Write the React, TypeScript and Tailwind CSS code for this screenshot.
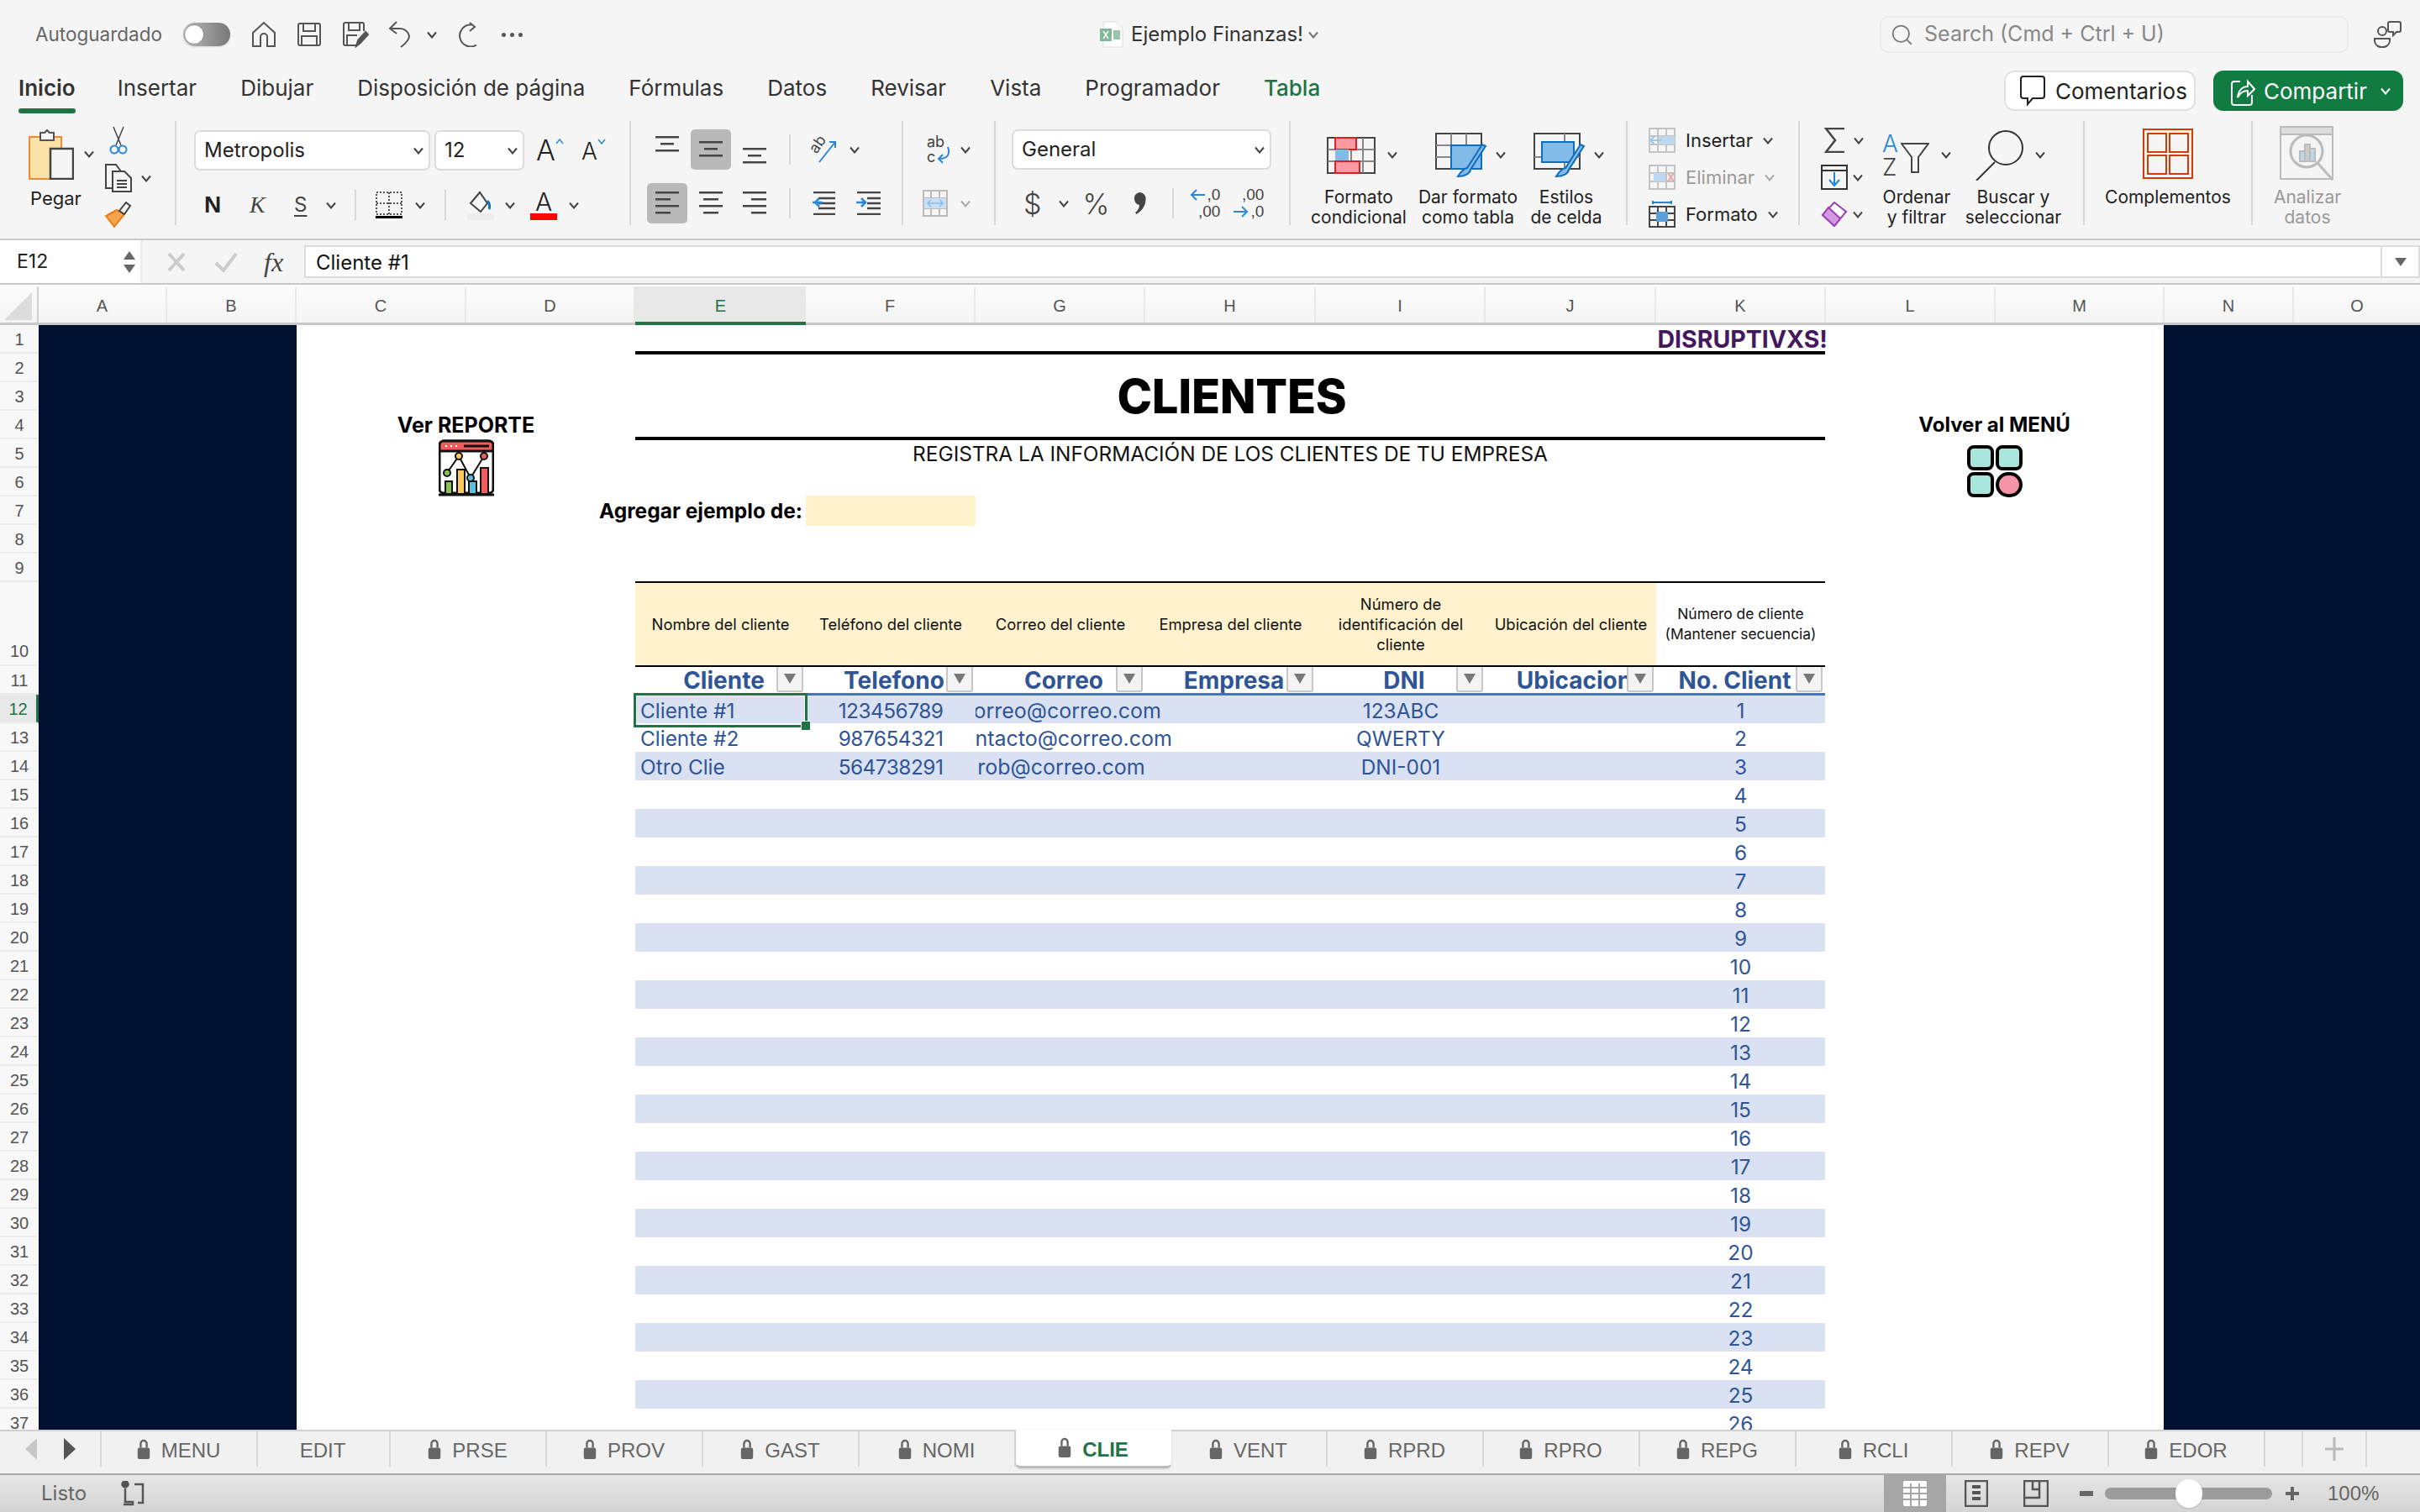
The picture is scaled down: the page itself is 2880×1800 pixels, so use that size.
import { Search } from "lucide-react";

const UI = "font-['Inter',sans-serif]";
const TABS = ["MENU", "EDIT", "PRSE", "PROV", "GAST", "NOMI", "CLIE", "VENT", "RPRD", "RPRO", "REPG", "RCLI", "REPV", "EDOR"];
const RIBBON_TABS = ["Insertar", "Dibujar", "Disposición de página", "Fórmulas", "Datos", "Revisar", "Vista", "Programador"];

function Chev({ className = "", color = "#444" }: { className?: string; color?: string }) {
  return (
    <svg width="12" height="9" viewBox="0 0 12 9" className={`shrink-0 ${className}`} fill="none" stroke={color} strokeWidth="2">
      <path d="M1 1.5 6 7.5 11 1.5" />
    </svg>
  );
}

function Sep() {
  return <div className="w-[2px] h-[124px] bg-[#d8d8d8] shrink-0" />;
}

function MiniSep({ className = "" }: { className?: string }) {
  return <div className={`w-[2px] h-[36px] bg-[#d8d8d8] shrink-0 ${className}`} />;
}

function Lines({ widths, gap = 10 }: { widths: [number, number][]; gap?: number }) {
  // horizontal alignment bars
  const h = (widths.length - 1) * gap + 4;
  return (
    <svg width="28" height={h} viewBox={`0 0 28 ${h}`} fill="#444" className="shrink-0">
      {widths.map(([x, w], i) => (
        <rect key={i} x={x} y={i * gap} width={w} height="2.5" />
      ))}
    </svg>
  );
}

function SelectBox({ text, className }: { text: string; className: string }) {
  return (
    <div className={`h-[48px] bg-white border-2 border-[#dcdcdc] rounded-[7px] flex items-center justify-between pl-[10px] pr-[6px] text-[24px] text-[#222] shrink-0 ${className}`}>
      <span>{text}</span>
      <Chev />
    </div>
  );
}

function BigLabel({ lines, className = "" }: { lines: string[]; className?: string }) {
  return (
    <div className={`text-[21px] leading-[24px] text-center whitespace-nowrap ${className}`}>
      {lines.map((l) => (
        <div key={l}>{l}</div>
      ))}
    </div>
  );
}

function GridIcon({ children, w = 60, h = 54 }: { children: React.ReactNode; w?: number; h?: number }) {
  return (
    <svg width={w} height={h} viewBox={`0 0 ${w} ${h}`} fill="none" className="shrink-0">
      {children}
    </svg>
  );
}

function TitleBar() {
  return (
    <div className="h-[80px] pt-[2px] flex items-center">
      <span className="ml-[42px] text-[22.5px] text-[#666]">Autoguardado</span>
      <div className="ml-[25px] w-[56px] h-[28px] rounded-full bg-gradient-to-r from-[#bdbdbd] to-[#777] flex items-center shadow">
        <div className="w-[24px] h-[24px] ml-[1px] bg-white rounded-full border border-[#888]" />
      </div>
      <svg width="30" height="32" viewBox="0 0 30 32" fill="none" stroke="#555" strokeWidth="2" className="ml-[25px]">
        <path d="M2 14 15 2l13 12v16H19V19a4 4 0 0 0-8 0v11H2Z" />
      </svg>
      <svg width="30" height="30" viewBox="0 0 30 30" fill="none" stroke="#555" strokeWidth="2" className="ml-[24px]">
        <path d="M4 2h22a2 2 0 0 1 2 2v22a2 2 0 0 1-2 2H4a2 2 0 0 1-2-2V4a2 2 0 0 1 2-2Z" />
        <path d="M8 2v9h14V2M6 28V17h18v11" />
      </svg>
      <svg width="32" height="32" viewBox="0 0 32 32" fill="none" stroke="#555" strokeWidth="2" className="ml-[24px]">
        <path d="M18 29H4a2 2 0 0 1-2-2V4a2 2 0 0 1 2-2h20a2 2 0 0 1 2 2v8" />
        <path d="M8 2v9h13V2M6 29V17h12" />
        <path d="m17 30 2-7 9-10 3 3-9 10Z" fill="#555" />
      </svg>
      <svg width="28" height="32" viewBox="0 0 28 32" fill="none" stroke="#555" strokeWidth="2" className="ml-[23px]">
        <path d="M10 1 2 9l8 6M2 9h12a11 11 0 0 1 11 9c0 5-6 10-10 13" />
      </svg>
      <Chev className="ml-[18px]" />
      <svg width="28" height="30" viewBox="0 0 28 30" fill="none" stroke="#555" strokeWidth="2" className="ml-[23px]">
        <path d="M18 3.5a13 13 0 1 0 6 24M16 1l6 5-6 5" />
      </svg>
      <div className="ml-[26px] flex gap-[5px]">
        <div className="w-[5px] h-[5px] rounded-full bg-[#555]" />
        <div className="w-[5px] h-[5px] rounded-full bg-[#555]" />
        <div className="w-[5px] h-[5px] rounded-full bg-[#555]" />
      </div>
      <div className="ml-[687px] flex items-center">
        <svg width="28" height="32" viewBox="0 0 28 32" className="shrink-0">
          <path d="M4 1h15l8 8v22H4Z" fill="#fff" stroke="#ddd" />
          <rect x="0" y="9" width="14" height="15" fill="#7fb799" />
          <rect x="16" y="11" width="8" height="11" fill="#7fb799" opacity="0.8" />
          <path d="M4 12l6 9M10 12l-6 9" stroke="#fff" strokeWidth="1.5" />
        </svg>
        <span className="ml-[9px] text-[24px] text-[#333]">Ejemplo Finanzas!</span>
        <Chev className="ml-[6px]" color="#777" />
      </div>
      <div className="ml-[668px] w-[558px] h-[44px] border-2 border-[#ebebeb] rounded-[10px] flex items-center pl-[10px] text-[#888] text-[25px]">
        <Search size={29} strokeWidth={1.5} color="#777" />
        <span className="ml-[12px]">Search (Cmd + Ctrl + U)</span>
      </div>
      <svg width="34" height="32" viewBox="0 0 34 32" fill="none" stroke="#555" strokeWidth="2" className="ml-[29px]">
        <circle cx="11" cy="12" r="5" />
        <path d="M2 21h18v3a8 8 0 0 1-9 7 8 8 0 0 1-9-7Z" />
        <path d="M20 1h11a2 2 0 0 1 2 2v8a2 2 0 0 1-2 2h-3l-4 4v-4h-4a2 2 0 0 1-2-2V3a2 2 0 0 1 2-2Z" />
      </svg>
    </div>
  );
}

function TabsRow() {
  return (
    <div className="h-[54px] flex items-start pr-[20px]">
      <div className="ml-[22px] flex flex-col items-stretch">
        <span className="text-[26px] leading-[50px] font-semibold text-[#333]">Inicio</span>
        <div className="h-[6px] rounded-full bg-[#217346] -mt-[1px]" />
      </div>
      <div className="ml-[50px] flex gap-[52px] text-[26px] leading-[50px] text-[#333]">
        {RIBBON_TABS.map((t) => (
          <span key={t}>{t}</span>
        ))}
        <span className="text-[#217346] font-medium">Tabla</span>
      </div>
      <div className="ml-auto mt-[4px] w-[228px] h-[48px] bg-white border-2 border-[#e0e0e0] rounded-[12px] flex items-center pl-[16px] text-[26px] text-[#222]">
        <svg width="32" height="38" viewBox="0 0 32 38" fill="none" stroke="#222" strokeWidth="2" className="shrink-0">
          <path d="M5 2h22a3 3 0 0 1 3 3v20a3 3 0 0 1-3 3H16l-6 7v-7H5a3 3 0 0 1-3-3V5a3 3 0 0 1 3-3Z" />
        </svg>
        <span className="ml-[11px]">Comentarios</span>
      </div>
      <div className="ml-[21px] mt-[4px] w-[226px] h-[48px] bg-[#107c41] rounded-[12px] flex items-center pl-[20px] text-[26px] text-white">
        <svg width="30" height="38" viewBox="0 0 30 38" fill="none" stroke="#fff" strokeWidth="2" className="shrink-0">
          <path d="M12 8H5a3 3 0 0 0-3 3v22a3 3 0 0 0 3 3h18a3 3 0 0 0 3-3v-9" />
          <path d="M9 27c1-9 6-13 12-13V8l8 9-8 8v-6c-5 0-9 2-12 8Z" />
        </svg>
        <span className="ml-[10px]">Compartir</span>
        <Chev className="ml-[16px]" color="#fff" />
      </div>
    </div>
  );
}

function Caret({ up }: { up?: boolean }) {
  return (
    <svg width="10" height="7" viewBox="0 0 10 7" fill="none" stroke="#2b88d8" strokeWidth="1.5" className="shrink-0 -mt-[22px]">
      <path d={up ? "M1 6 5 1l4 5" : "M1 1l4 5 4-5"} />
    </svg>
  );
}

function Ribbon() {
  return (
    <div className="h-[150px] pt-[10px] flex text-[#222]">
      {/* Portapapeles */}
      <div className="w-[208px] shrink-0 flex">
        <div className="w-[122px]">
          <div className="flex pl-[34px] pt-[10px]">
            <svg width="54" height="60" viewBox="0 0 54 60" fill="none" className="shrink-0">
              <path d="M1 9h38v50H1Z" fill="#fbe3a8" stroke="#ed8b33" strokeWidth="2" />
              <path d="M14 4h5l3-3 3 3h5v9H14Z" fill="#f5f5f5" stroke="#555" strokeWidth="2" />
              <rect x="26" y="23" width="27" height="36" fill="#f5f5f5" stroke="#444" strokeWidth="2.5" />
            </svg>
            <Chev className="ml-[12px] mt-[25px]" />
          </div>
          <div className="mt-[6px] pl-[36px] text-[22px]">Pegar</div>
        </div>
        <div className="w-[50px] flex flex-col gap-[11px] pt-[6px] -ml-[1px]">
          <svg width="24" height="34" viewBox="0 0 24 34" fill="none" stroke="#444" strokeWidth="1.5" className="ml-[8px] shrink-0">
            <path d="M6 1l9 22M18 1 9 23" />
            <circle cx="7" cy="28" r="4.5" stroke="#2b88d8" strokeWidth="2" />
            <circle cx="17" cy="28" r="4.5" stroke="#2b88d8" strokeWidth="2" />
          </svg>
          <div className="flex items-center w-[60px]">
            <svg width="34" height="34" viewBox="0 0 34 34" fill="none" stroke="#444" strokeWidth="2" className="ml-[3px] shrink-0">
              <path d="M10 29H2V1h12l6 8M10 9h14l8 8v16H10ZM15 20h12M15 24h12M15 28h12" />
            </svg>
            <Chev className="ml-[10px]" />
          </div>
          <svg width="34" height="32" viewBox="0 0 34 32" className="ml-[3px] shrink-0">
            <path d="M2 17 12 30l12-15-9-5Z" fill="#f6a24b" stroke="#e47d1a" strokeWidth="2" />
            <path d="m18 11 8-10 5 4-7 10Z" fill="#f0f0f0" stroke="#444" strokeWidth="2" />
          </svg>
        </div>
      </div>
      <Sep />
      {/* Fuente */}
      <div className="w-[539px] shrink-0 pl-[21px] pt-[10px]">
        <div className="flex items-center">
          <SelectBox text="Metropolis" className="w-[281px]" />
          <SelectBox text="12" className="w-[107px] ml-[5px]" />
          <div className="ml-[14px] text-[34px] leading-[48px] font-light">A</div>
          <Caret up />
          <div className="ml-[21px] text-[28px] leading-[48px] font-light mt-[2px]">A</div>
          <Caret />
        </div>
        <div className="flex items-center h-[48px] mt-[16px]">
          <span className="ml-[12px] font-['Liberation_Sans',sans-serif] font-bold text-[28px] w-[22px]">N</span>
          <span className="ml-[32px] font-['Liberation_Serif',serif] italic text-[28px] w-[20px] text-[#444]">K</span>
          <span className="ml-[33px] text-[24px] underline underline-offset-4 text-[#444] w-[16px]">S</span>
          <Chev className="ml-[22px]" />
          <MiniSep className="ml-[22px]" />
          <svg width="32" height="32" viewBox="0 0 32 32" fill="none" stroke="#555" strokeWidth="2" strokeDasharray="2 2" className="ml-[23px]">
            <rect x="1" y="1" width="30" height="26" />
            <path d="M16 1v26M1 14h30" />
            <path d="M0 30.5h32" stroke="#000" strokeWidth="3" strokeDasharray="none" />
          </svg>
          <Chev className="ml-[15px]" />
          <MiniSep className="ml-[23px]" />
          <div className="ml-[25px] flex flex-col items-center w-[32px] shrink-0">
            <svg width="28" height="26" viewBox="0 0 28 26" fill="none" stroke="#444" strokeWidth="2">
              <path d="M2 15 13 2l9 13-8 10Z" />
              <path d="M22 12c3 3 3 8 2 10" stroke="#106ebe" strokeWidth="3" />
            </svg>
            <div className="w-[32px] h-[8px] bg-[#ededed] mt-[1px]" />
          </div>
          <Chev className="ml-[13px]" />
          <div className="ml-[18px] flex flex-col items-center w-[32px] shrink-0">
            <span className="text-[30px] leading-[26px] font-light">A</span>
            <div className="w-[32px] h-[8px] bg-[#ff0000] mt-[1px]" />
          </div>
          <Chev className="ml-[14px]" />
        </div>
      </div>
      <Sep />
      {/* Alineación */}
      <div className="w-[188px] shrink-0 pt-[10px]">
        <div className="flex items-center h-[48px]">
          <div className="ml-[29px] self-start mt-[8px]"><Lines widths={[[0, 28], [6, 16], [0, 28]]} gap={8} /></div>
          <div className="ml-[14px] w-[48px] h-[48px] rounded-[5px] bg-[#b9b9b9] flex items-center justify-center"><Lines widths={[[0, 28], [6, 16], [0, 28]]} gap={8} /></div>
          <div className="ml-[14px] self-end mb-[6px]"><Lines widths={[[0, 28], [6, 16], [0, 28]]} gap={8} /></div>
        </div>
        <div className="flex items-center h-[48px] mt-[16px]">
          <div className="ml-[19px] w-[48px] h-[48px] rounded-[5px] bg-[#b9b9b9] flex items-center justify-center"><Lines widths={[[0, 28], [0, 18], [0, 28], [0, 18]]} gap={8} /></div>
          <div className="ml-[14px]"><Lines widths={[[0, 28], [5, 18], [0, 28], [5, 18]]} gap={8} /></div>
          <div className="ml-[24px]"><Lines widths={[[0, 28], [10, 18], [0, 28], [10, 18]]} gap={8} /></div>
        </div>
      </div>
      <div className="flex flex-col gap-[28px] pt-[16px] shrink-0">
        <MiniSep />
        <MiniSep />
      </div>
      <div className="w-[132px] shrink-0 pt-[10px]">
        <div className="flex items-center h-[48px]">
          <svg width="34" height="34" viewBox="0 0 34 34" fill="none" className="ml-[22px] shrink-0 overflow-visible">
            <text x="2" y="18" fontSize="18" fill="#444" transform="rotate(-55 10 14)">ab</text>
            <path d="M12 32 31 8M24 8h7v7" stroke="#2b88d8" strokeWidth="2" />
          </svg>
          <Chev className="ml-[14px]" />
        </div>
        <div className="flex items-center h-[48px] mt-[16px]">
          <svg width="30" height="28" viewBox="0 0 30 28" fill="none" className="ml-[25px] shrink-0">
            <path d="M2 1h26M8 8h20M8 14h20M8 20h20M2 27h26" stroke="#444" strokeWidth="2.5" />
            <path d="M1 13h12M9 8l-5 5 5 5" stroke="#2b88d8" strokeWidth="2.5" />
          </svg>
          <svg width="30" height="28" viewBox="0 0 30 28" fill="none" className="ml-[22px] shrink-0">
            <path d="M2 1h28M14 8h16M14 14h16M14 20h16M2 27h28" stroke="#444" strokeWidth="2.5" />
            <path d="M1 13h12M7 8l5 5-5 5" stroke="#2b88d8" strokeWidth="2.5" />
          </svg>
        </div>
      </div>
      <Sep />
      {/* Ajustar texto */}
      <div className="w-[108px] shrink-0 pt-[10px]">
        <div className="flex items-center h-[48px]">
          <div className="ml-[28px] w-[30px] h-[36px] shrink-0 text-[18px] leading-[18px] text-[#444] relative">
            <div>ab</div>
            <div>c</div>
            <svg width="20" height="22" viewBox="0 0 20 22" fill="none" stroke="#2b88d8" strokeWidth="2" className="absolute left-[10px] top-[14px]">
              <path d="M15 1c3 8 0 14-10 14M9 10l-5 5 5 5" />
            </svg>
          </div>
          <Chev className="ml-[10px]" />
        </div>
        <div className="flex items-center h-[48px] mt-[16px]">
          <svg width="30" height="32" viewBox="0 0 30 32" fill="none" className="ml-[23px] shrink-0">
            <rect x="1" y="1" width="28" height="30" stroke="#bbb" strokeWidth="2" />
            <path d="M1 10h28M1 22h28M10 1v9M20 1v9M10 22v9M20 22v9" stroke="#bbb" strokeWidth="2" />
            <rect x="2" y="10" width="26" height="12" fill="#c9e0f4" />
            <path d="M6 16h18M10 12l-4 4 4 4M20 12l4 4-4 4" stroke="#8dbce6" strokeWidth="1.5" />
          </svg>
          <Chev className="ml-[15px]" color="#aaa" />
        </div>
      </div>
      <Sep />
      {/* Número */}
      <div className="w-[349px] shrink-0 pt-[10px]">
        <SelectBox text="General" className="w-[309px] ml-[19px]" />
        <div className="flex items-center h-[48px] mt-[16px]">
          <span className="ml-[33px] text-[34px] font-light text-[#444]">$</span>
          <Chev className="ml-[21px]" />
          <span className="ml-[16px] text-[34px] font-light text-[#444]">%</span>
          <svg width="15" height="26" viewBox="0 0 15 26" fill="#444" className="ml-[29px] shrink-0">
            <path d="M7 0a7.500 7.500 0 0 1 7.500 8c0 7-4 14-11 18L2 24c3-2 5-6 5-9a7 7 0 0 1-6-7 7 7 0 0 1 6-8Z" />
          </svg>
          <MiniSep className="ml-[31px]" />
          <div className="ml-[23px] w-[32px] font-['Liberation_Sans',sans-serif] text-[19px] leading-[20px] text-[#444]">
            <div className="flex justify-end items-center">
              <svg width="18" height="16" viewBox="0 0 18 16" fill="none" stroke="#2b88d8" strokeWidth="2" className="shrink-0 mr-[2px]">
                <path d="M18 8H2M8 2 2 8l6 6" />
              </svg>
              <span>,0</span>
            </div>
            <div className="text-right">,00</div>
          </div>
          <div className="ml-[20px] w-[32px] font-['Liberation_Sans',sans-serif] text-[19px] leading-[20px] text-[#444]">
            <div className="text-right">,00</div>
            <div className="flex justify-end items-center">
              <svg width="18" height="16" viewBox="0 0 18 16" fill="none" stroke="#2b88d8" strokeWidth="2" className="shrink-0 mr-[2px]">
                <path d="M0 8h16M10 2l6 6-6 6" />
              </svg>
              <span>,0</span>
            </div>
          </div>
        </div>
      </div>
      <Sep />
      {/* Estilos */}
      <div className="w-[399px] shrink-0 flex">
        <div className="w-[140px] ml-[11px] flex flex-col items-center">
          <div className="h-[79px] flex items-center pt-[2px] ml-[8px]">
            <GridIcon w={58} h={44}>
              <path d="M1 1h56v42H1Z" stroke="#444" strokeWidth="2" />
              <path d="M1 15h56M1 29h56M29 1v42M43 1v42" stroke="#888" strokeWidth="2" />
              <rect x="10" y="1" width="25" height="14" fill="#ff9aa2" stroke="#e02020" strokeWidth="2" />
              <rect x="10" y="15" width="16" height="14" fill="#83bbe8" />
              <rect x="10" y="29" width="29" height="14" fill="#ff9aa2" stroke="#e02020" strokeWidth="2" />
            </GridIcon>
            <Chev className="ml-[14px]" />
          </div>
          <BigLabel lines={["Formato", "condicional"]} />
        </div>
        <div className="w-[130px] flex flex-col items-center -ml-[5px]">
          <div className="h-[79px] flex items-center pt-[2px] ml-[6px]">
            <GridIcon w={62} h={54}>
              <path d="M1 1h54v42H1Z" stroke="#444" strokeWidth="2" />
              <path d="M1 15h54M1 29h54M19 1v42M37 1v42" stroke="#888" strokeWidth="2" />
              <rect x="19" y="15" width="36" height="28" fill="#83bbe8" stroke="#106ebe" strokeWidth="2" />
              <path d="M56 14 38 42c-5 1-8 5-11 10 8 0 14-3 15-8l18-28Z" fill="#83bbe8" stroke="#106ebe" strokeWidth="2" />
            </GridIcon>
            <Chev className="ml-[10px]" />
          </div>
          <BigLabel lines={["Dar formato", "como tabla"]} />
        </div>
        <div className="w-[100px] flex flex-col items-center ml-[2px]">
          <div className="h-[79px] flex items-center pt-[2px] ml-[6px]">
            <GridIcon w={62} h={54}>
              <path d="M1 1h54v42H1Z" stroke="#444" strokeWidth="2" />
              <path d="M1 29h54M37 1v42" stroke="#888" strokeWidth="2" />
              <rect x="10" y="11" width="38" height="24" fill="#83bbe8" stroke="#106ebe" strokeWidth="2" />
              <path d="M56 14 38 42c-5 1-8 5-11 10 8 0 14-3 15-8l18-28Z" fill="#83bbe8" stroke="#106ebe" strokeWidth="2" />
            </GridIcon>
            <Chev className="ml-[10px]" />
          </div>
          <BigLabel lines={["Estilos", "de celda"]} />
        </div>
      </div>
      <Sep />
      {/* Celdas */}
      <div className="w-[203px] shrink-0 pl-[25px] text-[22px] flex flex-col gap-[14px] pt-[8px]">
        <div className="flex items-center h-[30px]">
          <svg width="32" height="30" viewBox="0 0 32 30" fill="none" className="shrink-0">
            <path d="M1 1h30v28H1ZM1 10h30M1 20h30M11 1v28M21 1v28" stroke="#c4c4c4" strokeWidth="2" />
            <rect x="12" y="10" width="19" height="10" fill="#bcd8f0" />
            <path d="M1 15h14M7 10l-5 5 5 5" stroke="#9cc6ea" strokeWidth="2" />
          </svg>
          <span className="ml-[12px] text-[#222]">Insertar</span>
          <Chev className="ml-[12px]" />
        </div>
        <div className="flex items-center h-[30px] text-[#9a9a9a]">
          <svg width="32" height="30" viewBox="0 0 32 30" fill="none" className="shrink-0">
            <path d="M1 1h30v28H1ZM1 10h30M1 20h30M11 1v28M21 1v28" stroke="#c4c4c4" strokeWidth="2" />
            <rect x="6" y="10" width="14" height="10" fill="#bcd8f0" />
            <path d="m23 10 7 10m0-10-7 10" stroke="#f0a0a0" strokeWidth="2" />
          </svg>
          <span className="ml-[12px]">Eliminar</span>
          <Chev className="ml-[12px]" color="#aaa" />
        </div>
        <div className="flex items-center h-[30px]">
          <svg width="32" height="32" viewBox="0 0 32 32" fill="none" className="shrink-0">
            <path d="M1 7h30v24H1ZM1 15h30M1 23h30M11 7v24M21 7v24" stroke="#444" strokeWidth="2" />
            <rect x="9" y="13" width="14" height="12" fill="#5a9fd8" />
            <path d="M5 2h22M5 0v4M27 0v4" stroke="#1f85d3" strokeWidth="2" />
          </svg>
          <span className="ml-[12px]">Formato</span>
          <Chev className="ml-[12px]" />
        </div>
      </div>
      <Sep />
      {/* Edición */}
      <div className="w-[337px] shrink-0 flex">
        <div className="w-[92px] pl-[25px] flex flex-col gap-[14px] pt-[8px]">
          <div className="flex items-center h-[30px]">
            <svg width="26" height="30" viewBox="0 0 26 30" fill="none" stroke="#444" strokeWidth="2.5" className="shrink-0 ml-[4px]">
              <path d="M24 1H2l11 14L2 29h22" />
            </svg>
            <Chev className="ml-[9px]" />
          </div>
          <div className="flex items-center h-[30px]">
            <svg width="32" height="30" viewBox="0 0 32 30" fill="none" className="shrink-0">
              <path d="M1 1h30v28H1Z" stroke="#333" strokeWidth="2" />
              <path d="M1 7h30" stroke="#333" strokeWidth="2" />
              <path d="M16 9v15M10 18l6 7 6-7" stroke="#1f85d3" strokeWidth="2" />
            </svg>
            <Chev className="ml-[6px]" />
          </div>
          <div className="flex items-center h-[30px]">
            <svg width="32" height="30" viewBox="0 0 32 30" className="shrink-0">
              <path d="M16 1 30 12 16 29 2 16Z" fill="#fff" stroke="#9a3fb5" strokeWidth="2" />
              <path d="M9 7 23 20 16 29 2 16Z" fill="#d49ae0" stroke="#9a3fb5" strokeWidth="2" />
            </svg>
            <Chev className="ml-[6px]" />
          </div>
        </div>
        <div className="w-[110px] flex flex-col items-center ml-[-8px]">
          <div className="h-[79px] flex items-center pt-[2px]">
            <div className="w-[56px] h-[56px] shrink-0 relative text-[28px] leading-[28px] font-light text-[#444]">
              <div className="text-[#2b88d8]">A</div>
              <div>Z</div>
              <svg width="34" height="36" viewBox="0 0 34 36" fill="none" stroke="#444" strokeWidth="2" className="absolute right-0 top-[13px]">
                <path d="M1 1h32L21 17v18h-8V17Z" />
              </svg>
            </div>
            <Chev className="ml-[14px]" />
          </div>
          <BigLabel lines={["Ordenar", "y filtrar"]} />
        </div>
        <div className="w-[120px] flex flex-col items-center">
          <div className="h-[79px] flex items-center pt-[2px] -ml-[8px]">
            <svg width="58" height="60" viewBox="0 0 58 60" fill="none" stroke="#333" strokeWidth="2" className="shrink-0">
              <circle cx="37" cy="21" r="20" />
              <path d="M24 38 2 60" />
            </svg>
            <Chev className="ml-[14px]" />
          </div>
          <BigLabel lines={["Buscar y", "seleccionar"]} />
        </div>
      </div>
      <Sep />
      {/* Complementos */}
      <div className="w-[198px] shrink-0 flex flex-col items-center pt-[9px]">
        <svg width="60" height="60" viewBox="0 0 60 60" fill="none" stroke="#d83b01" strokeWidth="2" className="mb-[10px] shrink-0">
          <rect x="1" y="1" width="58" height="58" />
          <rect x="6" y="6" width="22" height="22" />
          <rect x="32" y="6" width="22" height="22" />
          <rect x="6" y="32" width="22" height="22" />
          <rect x="32" y="32" width="22" height="22" />
        </svg>
        <BigLabel lines={["Complementos"]} />
      </div>
      <Sep />
      <div className="w-[130px] shrink-0 flex flex-col items-center text-[#999] pt-[6px]">
        <svg width="66" height="66" viewBox="0 0 66 66" fill="none" stroke="#bbb" strokeWidth="2" className="mb-[7px] shrink-0">
          <rect x="1" y="1" width="62" height="62" />
          <rect x="1" y="1" width="62" height="9" fill="#ddd" />
          <circle cx="32" cy="30" r="19" fill="#f4f4f4" strokeWidth="3" />
          <path d="m45 44 18 20" strokeWidth="3" />
          <rect x="24" y="30" width="6" height="12" fill="#bcd8f0" />
          <rect x="30" y="22" width="6" height="20" fill="#ccc" />
          <rect x="36" y="27" width="6" height="15" fill="#bcd8f0" />
        </svg>
        <BigLabel lines={["Analizar", "datos"]} />
      </div>
    </div>
  );
}

function FormulaBar() {
  return (
    <div className="h-[55px] bg-white border-y-2 border-[#c8c8c8] flex items-stretch">
      <div className="w-[170px] bg-white flex items-center pl-[20px] pr-[6px] text-[23px] text-[#222] border-r-[3px] border-[#ededed] justify-between">
        <span>E12</span>
        <div className="flex flex-col gap-[6px] text-[#666]">
          <svg width="14" height="10" viewBox="0 0 14 10" fill="#666"><path d="M7 0 14 10H0Z" /></svg>
          <svg width="14" height="10" viewBox="0 0 14 10" fill="#666"><path d="M7 10 14 0H0Z" /></svg>
        </div>
      </div>
      <div className="w-[192px] bg-[#f5f5f5] flex items-center">
        <svg width="22" height="24" viewBox="0 0 22 24" fill="none" stroke="#ccc" strokeWidth="4" className="ml-[29px]">
          <path d="m2 2 18 20M20 2 2 22" />
        </svg>
        <svg width="28" height="24" viewBox="0 0 28 24" fill="none" stroke="#ccc" strokeWidth="4" className="ml-[34px]">
          <path d="m2 13 9 9L26 2" />
        </svg>
        <span className="ml-[31px] font-['Liberation_Serif',serif] italic text-[32px] text-[#444]">fx</span>
      </div>
      <div className="flex-1 bg-[#f5f5f5] py-[6px]">
        <div className="h-full bg-white border-y-2 border-l-2 border-[#dcdcdc] flex items-center pl-[12px] pt-[2px] text-[24px] text-[#111]">Cliente #1</div>
      </div>
      <div className="w-[47px] bg-[#f5f5f5] py-[6px]">
        <div className="h-full bg-white border-2 border-[#dcdcdc] flex items-center justify-center">
          <svg width="14" height="10" viewBox="0 0 14 10" fill="#666"><path d="M7 10 14 0H0Z" /></svg>
        </div>
      </div>
    </div>
  );
}

function ColumnHeaders() {
  const cols: [string, string][] = [
    ["A", "w-[153px]"], ["B", "w-[154px]"], ["C", "w-[202px]"], ["D", "w-[201px]"], ["E", "w-[203px]"],
    ["F", "w-[202px]"], ["G", "w-[202px]"], ["H", "w-[203px]"], ["I", "w-[202px]"], ["J", "w-[203px]"],
    ["K", "w-[202px]"], ["L", "w-[202px]"], ["M", "w-[201px]"], ["N", "w-[154px]"], ["O", "w-[152px]"],
  ];
  return (
    <div className="h-[48px] flex border-t-2 border-t-white border-b-[3px] border-[#c8c8c8] bg-gradient-to-b from-[#fcfcfc] to-[#f4f4f4] font-['Liberation_Sans',sans-serif] text-[20px] text-[#555]">
      <div className="w-[46px] shrink-0 border-r-2 border-[#d0d0d0] flex items-end justify-center pb-[2px]">
        <svg width="34" height="34" viewBox="0 0 34 34" fill="#dcdcdc"><path d="M33 0v33H0Z" /></svg>
      </div>
      {cols.map(([c, w]) => (
        <div
          key={c}
          className={`${w} shrink-0 flex items-center justify-center pt-[3px] ${
            c === "E"
              ? "bg-[#e8e8e8] text-[#217346] border-b-[4px] border-[#217346] -mb-[3px]"
              : "border-r-2 border-[#e8e8e8]"
          }`}
        >
          {c}
        </div>
      ))}
    </div>
  );
}

function RowHeaders() {
  const rows = Array.from({ length: 37 }, (_, i) => i + 1);
  return (
    <div className="w-[46px] shrink-0 font-['Liberation_Sans',sans-serif] text-[20px] text-[#555] bg-[#f8f8f8]">
      {rows.map((r) => (
        <div
          key={r}
          className={`flex justify-center border-b-2 ${r === 10 ? "h-[100px] items-end pb-[1px]" : "h-[34px] items-center pt-[2px]"} ${
            r === 12 ? "bg-[#e8e8e8] text-[#217346] border-r-[3px] border-r-[#217346] border-b-[#e8e8e8]" : "border-[#ebebeb]"
          }`}
        >
          {r}
        </div>
      ))}
    </div>
  );
}

function FilterButton() {
  return (
    <div className="absolute right-[3px] top-0 w-[32px] h-[30px] bg-[#f4f4f4] border-2 border-t-0 border-[#c8c8c8] rounded-b-[3px] flex items-center justify-center">
      <svg width="14" height="12" viewBox="0 0 14 12" fill="#777"><path d="M0 0h14L7 12Z" /></svg>
    </div>
  );
}

function SheetTable() {
  const heads = ["Nombre del cliente", "Teléfono del cliente", "Correo del cliente", "Empresa del cliente", "Número de identificación del cliente", "Ubicación del cliente"];
  const names = ["Cliente", "Telefono", "Correo", "Empresa", "DNI", "Ubicacion"];
  const data: Record<number, string[]> = {
    1: ["Cliente #1", "123456789", "correo@correo.com", "123ABC"],
    2: ["Cliente #2", "987654321", "contacto@correo.com", "QWERTY"],
    3: ["Otro Clie", "564738291", "rob@correo.com", "DNI-001"],
  };
  const tpl = "grid grid-cols-[203px_202px_202px_203px_202px_203px_201px]";
  return (
    <div className="shrink-0">
      <div className={`${tpl} h-[102px] border-y-2 border-black text-[18.4px] leading-[24px] text-[#111] text-center`}>
        {heads.map((h) => (
          <div key={h} className="bg-[#fff2cc] flex items-center justify-center px-[10px]">
            {h}
          </div>
        ))}
        <div className="flex items-center justify-center text-[17.4px]">
          Número de cliente
          <br />
          (Mantener secuencia)
        </div>
      </div>
      <div className={`${tpl} h-[34px] border-b-[3px] border-[#4472c4] text-[28px] font-bold text-[#2f5597]`}>
        {names.map((n) => (
          <div key={n} className="relative flex justify-center items-center whitespace-nowrap overflow-hidden pl-[8px]">
            <span className="shrink-0 leading-[30px]">{n}</span>
            <FilterButton />
          </div>
        ))}
        <div className="relative flex justify-center items-center whitespace-nowrap overflow-hidden pr-[14px]">
          <span className="shrink-0 leading-[30px]">No. Client</span>
          <FilterButton />
        </div>
      </div>
      {Array.from({ length: 26 }, (_, i) => i + 1).map((n) => {
        const row = data[n];
        return (
          <div key={n} className={`${tpl} text-[24.4px] leading-[36px] text-[#2f5597] ${n % 2 === 1 ? "bg-[#d9e1f2]" : ""} ${n === 1 ? "h-[33px]" : "h-[34px]"}`}>
            <div className="relative pl-[6px] whitespace-nowrap">
              {row?.[0]}
              {n === 1 && (
                <>
                  <div className="absolute -left-[2px] -right-[2px] -top-[3px] -bottom-[2px] border-[3px] border-[#217346] shadow-[inset_0_0_0_1px_#fff]" />
                  <div className="absolute -right-[5px] -bottom-[5px] w-[11px] h-[11px] bg-[#217346] border-l border-t border-white" />
                </>
              )}
            </div>
            <div className="flex justify-center tracking-[-0.5px]">{row?.[1]}</div>
            <div className="flex justify-center whitespace-nowrap text-[25px] pl-[2px] [clip-path:inset(0_-300px_0_0)]">
              <span className="shrink-0">{row?.[2]}</span>
            </div>
            <div />
            <div className="flex justify-center">{row?.[3]}</div>
            <div />
            <div className="flex justify-center">{n}</div>
          </div>
        );
      })}
    </div>
  );
}

function SheetTabs() {
  return (
    <div className="h-[54px] bg-[#f1f1f1] border-t-2 border-[#d0d0d0] border-b-2 border-b-[#a8a8a8] flex font-['Liberation_Sans',sans-serif] text-[24px] text-[#666]">
      <div className="w-[121px] shrink-0 flex items-center border-r-2 border-[#d8d8d8] mb-[8px]">
        <svg width="14" height="26" viewBox="0 0 14 26" fill="#c8c8c8" className="ml-[30px]"><path d="M14 0v26L0 13Z" /></svg>
        <svg width="14" height="26" viewBox="0 0 14 26" fill="#555" className="ml-[32px]"><path d="M0 0v26l14-13Z" /></svg>
      </div>
      {TABS.map((t) => (
        <div
          key={t}
          className={`${
            t === "CLIE"
              ? "w-[185px] bg-white text-[#217346] font-bold -mt-[2px] mb-[6px] rounded-b-[6px] border-b-[3px] border-[#bbb] shadow-sm"
              : t === "EDIT"
              ? "w-[158px] border-r-2 border-[#d8d8d8] mb-[8px]"
              : "w-[186px] border-r-2 border-[#d8d8d8] mb-[8px]"
          } shrink-0 flex items-center justify-center gap-[12px] pt-[4px] pr-[2px]`}
        >
          {t !== "EDIT" && (
            <svg width="18" height="24" viewBox="0 0 20 30" fill="#666" className="shrink-0 -mt-[5px]">
              <path d="M4 13V7a6 6 0 0 1 12 0v6h-3V7a3 3 0 0 0-6 0v6Z" />
              <rect x="1" y="13" width="18" height="17" rx="2.5" />
            </svg>
          )}
          {t}
        </div>
      ))}
      <div className="w-[45px] shrink-0 border-r-2 border-[#d8d8d8] mb-[8px]" />
      <div className="w-[76px] shrink-0 border-r-2 border-[#d8d8d8] mb-[8px] flex items-center justify-center">
        <svg width="22" height="28" viewBox="0 0 22 28" fill="#bbb"><path d="M9.5 0h3v12.5H22v3h-9.5V28h-3V15.500H0v-3h9.500Z" /></svg>
      </div>
    </div>
  );
}

function StatusBar() {
  return (
    <div className="h-[44px] bg-gradient-to-b from-[#e6e6e6] to-[#d4d4d4] flex items-center text-[24px] text-[#666]">
      <span className="ml-[49px] w-[55px]">Listo</span>
      <svg width="30" height="30" viewBox="0 0 30 30" fill="none" stroke="#555" strokeWidth="2.5" className="ml-[40px] shrink-0">
        <circle cx="5" cy="4" r="3.500" fill="#555" />
        <path d="M5 9v16h9v3H3M16 4h10v22h-6" />
      </svg>
      <div className="ml-[2068px] w-[74px] h-[44px] bg-[#a6a6a6] flex items-center justify-center shrink-0">
        <svg width="28" height="30" viewBox="0 0 28 30" fill="#fff">
          <rect x="0" y="0" width="28" height="30" rx="2" />
          <path d="M0 8h28M0 15h28M0 22h28M9 3v27M19 3v27" stroke="#a6a6a6" strokeWidth="2" />
        </svg>
      </div>
      <svg width="28" height="32" viewBox="0 0 28 32" fill="none" stroke="#555" strokeWidth="2.5" className="ml-[22px] shrink-0">
        <rect x="1" y="1" width="26" height="30" />
        <path d="M9 8h10M9 15h10M9 22h10" strokeWidth="4" />
      </svg>
      <svg width="30" height="32" viewBox="0 0 30 32" fill="none" stroke="#555" strokeWidth="2.5" className="ml-[42px] shrink-0">
        <rect x="1" y="1" width="28" height="30" />
        <path d="M1 21h18V1M11 1v10h8" />
      </svg>
      <div className="ml-[37px] w-[16px] h-[6px] bg-[#666] shrink-0" />
      <div className="ml-[14px] w-[199px] h-[14px] rounded-full bg-[#9c9c9c] flex items-center pl-[84px] shrink-0">
        <div className="w-[32px] h-[34px] rounded-full bg-white shadow shrink-0" />
      </div>
      <svg width="16" height="16" viewBox="0 0 16 16" fill="#666" className="ml-[16px] shrink-0"><path d="M6 0h4v6h6v4h-6v6H6v-6H0V6h6Z" /></svg>
      <span className="ml-[34px] font-['Liberation_Sans',sans-serif]">100%</span>
    </div>
  );
}

export default function App() {
  return (
    <div className={`w-[2880px] h-[1800px] overflow-hidden bg-[#f5f5f5] flex flex-col ${UI}`}>
      <TitleBar />
      <TabsRow />
      <Ribbon />
      <FormulaBar />
      <ColumnHeaders />
      <div className="h-[1315px] flex overflow-hidden bg-white">
        <RowHeaders />
        <div className="w-[307px] shrink-0 bg-[#001030]" />
        {/* Columnas C-D */}
        <div className="w-[403px] shrink-0 flex flex-col items-center pt-[102px]">
          <div className="h-[34px] text-[25px] leading-[34px] font-bold text-black shrink-0">Ver REPORTE</div>
          <svg width="66" height="68" viewBox="0 0 66 68" fill="none" className="shrink-0">
            <rect x="1" y="2" width="64" height="62" rx="5" fill="#fff" stroke="#111" strokeWidth="3" />
            <path d="M1 14V7a5 5 0 0 1 5-5h54a5 5 0 0 1 5 5v7Z" fill="#f25c5c" stroke="#111" strokeWidth="3" />
            <path d="M30 8h30" stroke="#111" strokeWidth="3" />
            <path d="M8 8h2M14 8h2M20 8h2" stroke="#fff" strokeWidth="2" />
            <path d="M10 40 24 20l14 26 16-26" stroke="#111" strokeWidth="2" />
            <circle cx="10" cy="40" r="4" fill="#8bc34a" stroke="#111" strokeWidth="2" />
            <circle cx="24" cy="20" r="4" fill="#ffc65c" stroke="#111" strokeWidth="2" />
            <circle cx="38" cy="46" r="4" fill="#5bc0de" stroke="#111" strokeWidth="2" />
            <circle cx="54" cy="20" r="4" fill="#f25c5c" stroke="#111" strokeWidth="2" />
            <rect x="8" y="50" width="8" height="15" fill="#8bc34a" stroke="#111" strokeWidth="2" />
            <rect x="22" y="36" width="9" height="29" fill="#ffc65c" stroke="#111" strokeWidth="2" />
            <rect x="36" y="50" width="9" height="15" fill="#5bc0de" stroke="#111" strokeWidth="2" />
            <rect x="50" y="34" width="9" height="31" fill="#f25c5c" stroke="#111" strokeWidth="2" />
            <path d="M0 66h66" stroke="#111" strokeWidth="3" />
          </svg>
        </div>
        {/* Columnas E-K */}
        <div className="w-[1416px] shrink-0 flex flex-col">
          <div className="h-[35px] shrink-0 border-b-[4px] border-black flex justify-end text-[28.5px] leading-[34px] font-bold text-[#44185e] whitespace-nowrap">
            <span className="shrink-0 -mr-[3px]">DISRUPTIVXS!</span>
          </div>
          <div className="h-[102px] shrink-0 pl-[4px] pt-[2px] border-b-[4px] border-black flex items-center justify-center text-[56px] font-extrabold text-black tracking-[-0.3px]">CLIENTES</div>
          <div className="h-[33px] shrink-0 text-[24.4px] leading-[32px] text-[#111] text-center">REGISTRA LA INFORMACIÓN DE LOS CLIENTES DE TU EMPRESA</div>
          <div className="h-[33px] shrink-0" />
          <div className="h-[36px] shrink-0 flex text-[24.5px] font-bold text-black">
            <div className="w-[203px] flex justify-end items-center whitespace-nowrap pr-[4px]">
              <span className="shrink-0">Agregar ejemplo de:</span>
            </div>
            <div className="w-[202px] bg-[#fff2cc]" />
          </div>
          <div className="h-[66px] shrink-0" />
          <SheetTable />
        </div>
        {/* Columnas L-M */}
        <div className="w-[403px] shrink-0 flex flex-col items-center pt-[102px]">
          <div className="h-[34px] text-[24px] leading-[34px] font-bold text-black shrink-0">Volver al MENÚ</div>
          <div className="mt-[7px] grid grid-cols-2 gap-[2px] w-[66px]">
            <div className="h-[30px] rounded-[8px] bg-[#a8e6dc] border-[4px] border-black" />
            <div className="h-[30px] rounded-[8px] bg-[#a8e6dc] border-[4px] border-black" />
            <div className="h-[30px] rounded-[8px] bg-[#a8e6dc] border-[4px] border-black" />
            <div className="h-[30px] rounded-full bg-[#f494a6] border-[4px] border-black" />
          </div>
        </div>
        <div className="flex-1 bg-[#001030]" />
      </div>
      <SheetTabs />
      <StatusBar />
    </div>
  );
}
